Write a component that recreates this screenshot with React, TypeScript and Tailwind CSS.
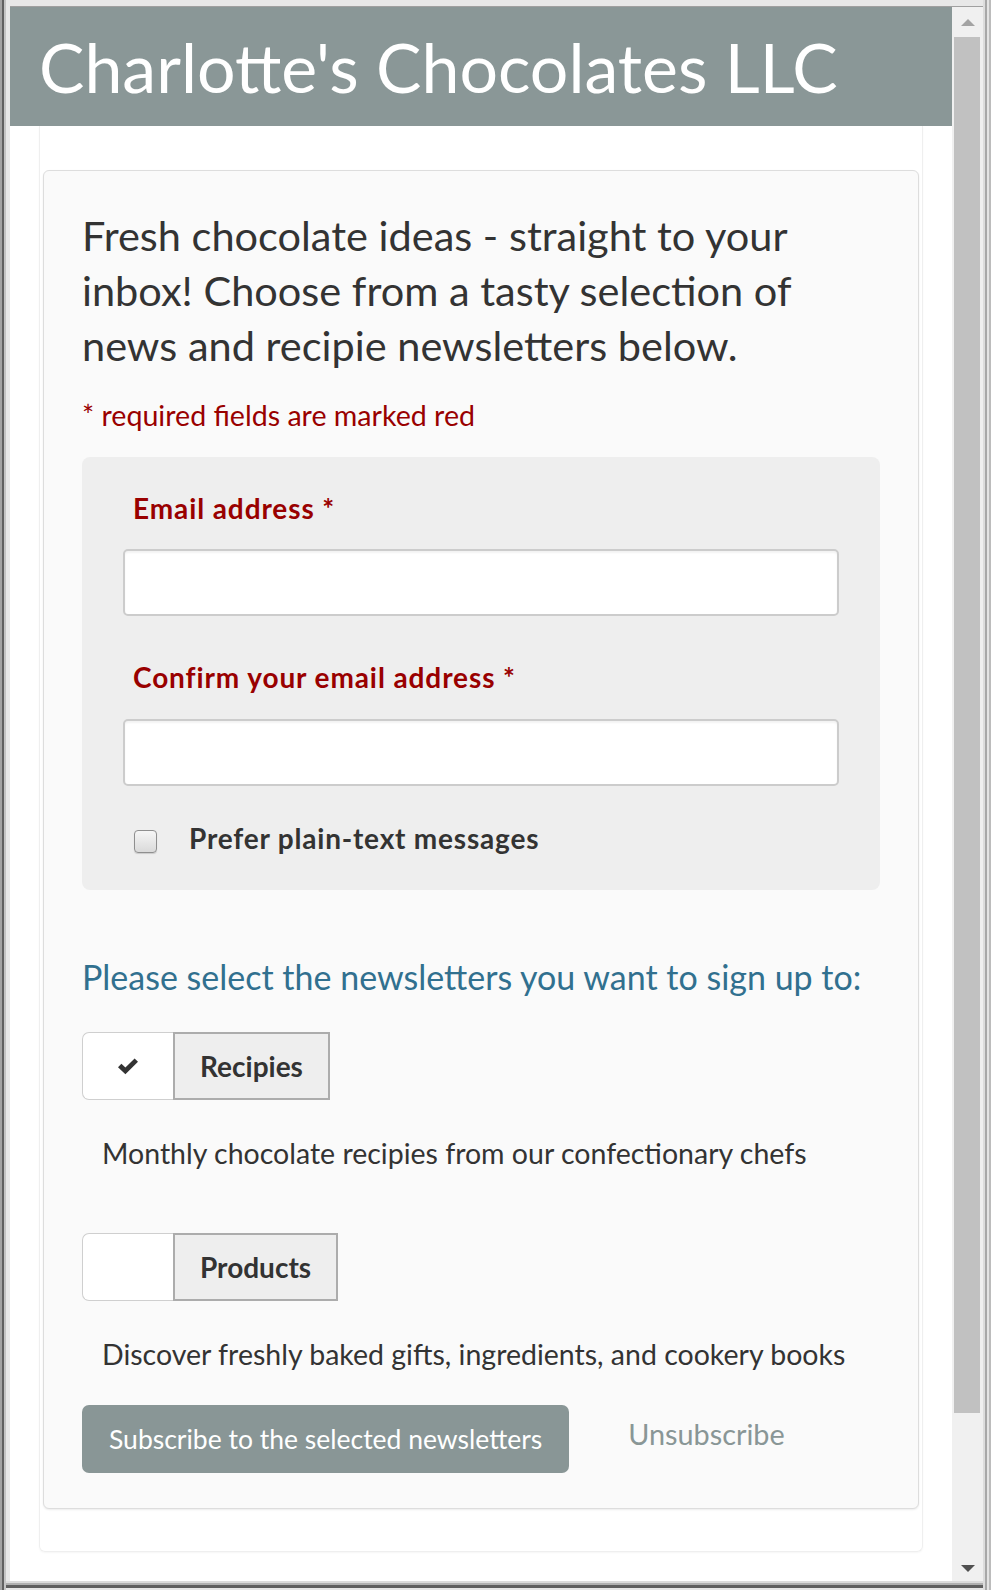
import React from "react";

function Check() {
  return (
    <svg width="22" height="18" viewBox="0 0 22 18" className="block">
      <path d="M1 10.2 L4.4 6.8 L8.4 10.6 L17.6 1.4 L21 4.8 L8.4 17.2 Z" fill="#333333" />
    </svg>
  );
}

function Toggle({ label, checked }: { label: string; checked: boolean }) {
  return (
    <div className="flex h-[68px]">
      <div className="w-[91px] h-full bg-white border border-[#cfcfcf] border-r-0 rounded-l-[7px] flex items-center justify-center">
        {checked ? <Check /> : null}
      </div>
      <div className="h-full bg-[#eeeeee] border-2 border-[#acacac] px-[25px] flex items-center text-[28px] font-bold text-[#333333] leading-none">
        {label}
      </div>
    </div>
  );
}

function Scrollbar() {
  return (
    <div className="w-[31px] bg-[#f0f0f0] flex flex-col shrink-0">
      <div className="h-[30px] flex items-start justify-center pt-[12px]">
        <div className="w-0 h-0 border-l-[7px] border-r-[7px] border-b-[7px] border-l-transparent border-r-transparent border-b-[#a3a3a3]" />
      </div>
      <div className="ml-[2px] mr-[3px] h-[1376px] bg-[#c1c1c1]" />
      <div className="flex-1" />
      <div className="h-[16px] flex items-start justify-center">
        <div className="w-0 h-0 border-l-[7px] border-r-[7px] border-t-[7px] border-l-transparent border-r-transparent border-t-[#505050]" />
      </div>
    </div>
  );
}

export default function App() {
  return (
    <div className="w-[991px] h-[1590px] flex bg-[#e8e8e8] overflow-hidden font-['Lato',sans-serif]">
      <div className="w-[2px] bg-[#a3a3a3] shrink-0" />
      <div className="w-[2px] bg-[#616161] shrink-0" />
      <div className="w-[2px] bg-[#c4c4c4] shrink-0" />
      <div className="flex-1 flex flex-col min-w-0">
        <div className="h-[6px] bg-[#e8e8e8] shrink-0" />
        <div className="h-[1px] bg-[#a0a0a0] ml-[4px] shrink-0" />
        <div className="flex-1 flex min-h-0">
          <div className="w-[4px] bg-[#e8e8e8] shrink-0" />
          <div className="flex-1 bg-white overflow-hidden flex flex-col min-w-0">
            <div className="h-[119px] bg-[#8a9797] shrink-0 pl-[29px]">
              <h1 className="text-[68px] leading-[119px] text-white font-normal whitespace-nowrap">
                Charlotte's Chocolates LLC
              </h1>
            </div>
            <div className="mx-[29px] border border-t-0 border-[#efefef] rounded-b-[6px] shadow-[0_1px_2px_rgba(0,0,0,0.04)] pt-[44px] pb-[42px] px-[3px] shrink-0">
              <div className="bg-[#fafafa] border border-[#dddddd] rounded-[6px] shadow-[0_1px_2px_rgba(0,0,0,0.08)] px-[38px] pt-[37px] pb-[35px]">
                <p className="text-[41.5px] leading-[55px] text-[#333333] whitespace-nowrap">
                  Fresh chocolate ideas - straight to your
                  <br />
                  inbox! Choose from a tasty selection of
                  <br />
                  news and recipie newsletters below.
                </p>
                <p className="mt-[23px] text-[28.6px] leading-[38px] text-[#990000]">
                  * required fields are marked red
                </p>
                <div className="mt-[23px] bg-[#eeeeee] rounded-[8px] px-[41px] pt-[32px] pb-[34px]">
                  <label className="block pl-[10px] text-[28px] tracking-[0.9px] leading-[38px] font-bold text-[#990000]">
                    Email address *
                  </label>
                  <div className="mt-[22px] h-[67px] bg-white border-2 border-[#cccccc] rounded-[5px] shadow-[inset_0_2px_2px_rgba(0,0,0,0.05)]" />
                  <label className="block mt-[42px] pl-[10px] text-[28px] tracking-[0.9px] leading-[38px] font-bold text-[#990000]">
                    Confirm your email address *
                  </label>
                  <div className="mt-[23px] h-[67px] bg-white border-2 border-[#cccccc] rounded-[5px] shadow-[inset_0_2px_2px_rgba(0,0,0,0.05)]" />
                  <div className="mt-[34px] h-[36px] flex items-start">
                    <div className="ml-[11px] mt-[10px] w-[23px] h-[23px] rounded-[4px] border border-[#8f8f8f] bg-gradient-to-b from-[#f6f6f6] to-[#dadada] shadow-[0_1px_1px_rgba(0,0,0,0.15)]" />
                    <span className="ml-[32px] text-[28px] tracking-[0.8px] leading-[36px] font-bold text-[#333333] whitespace-nowrap">
                      Prefer plain-text messages
                    </span>
                  </div>
                </div>
                <h2 className="mt-[65px] text-[34px] leading-[44px] text-[#31708f] font-normal whitespace-nowrap">
                  Please select the newsletters you want to sign up to:
                </h2>
                <div className="mt-[33px]">
                  <Toggle label="Recipies" checked={true} />
                </div>
                <p className="mt-[34px] pl-[20px] text-[28.5px] leading-[38px] text-[#333333] whitespace-nowrap">
                  Monthly chocolate recipies from our confectionary chefs
                </p>
                <div className="mt-[61px]">
                  <Toggle label="Products" checked={false} />
                </div>
                <p className="mt-[34px] pl-[20px] text-[28.5px] leading-[38px] text-[#333333] whitespace-nowrap">
                  Discover freshly baked gifts, ingredients, and cookery books
                </p>
                <div className="mt-[32px] flex items-start">
                  <button className="h-[68px] px-[27px] rounded-[7px] bg-[#899696] text-white text-[26.5px] leading-[68px] whitespace-nowrap">
                    Subscribe to the selected newsletters
                  </button>
                  <span className="ml-[59px] h-[58px] leading-[58px] text-[28.8px] text-[#899696] whitespace-nowrap">
                    Unsubscribe
                  </span>
                </div>
              </div>
            </div>
          </div>
          <Scrollbar />
        </div>
        <div className="h-[2px] bg-[#dcdcdc] shrink-0" />
        <div className="h-[2px] bg-[#b0b0b0] shrink-0" />
        <div className="h-[3px] bg-[#5f5f5f] shrink-0" />
        <div className="h-[2px] bg-[#e6e6e6] shrink-0" />
      </div>
      <div className="w-[2px] bg-[#dddddd] shrink-0" />
      <div className="w-[2px] bg-[#a8a8a8] shrink-0" />
      <div className="w-[2px] bg-[#e4e4e4] shrink-0" />
      <div className="w-[2px] bg-[#bcbcbc] shrink-0" />
    </div>
  );
}
